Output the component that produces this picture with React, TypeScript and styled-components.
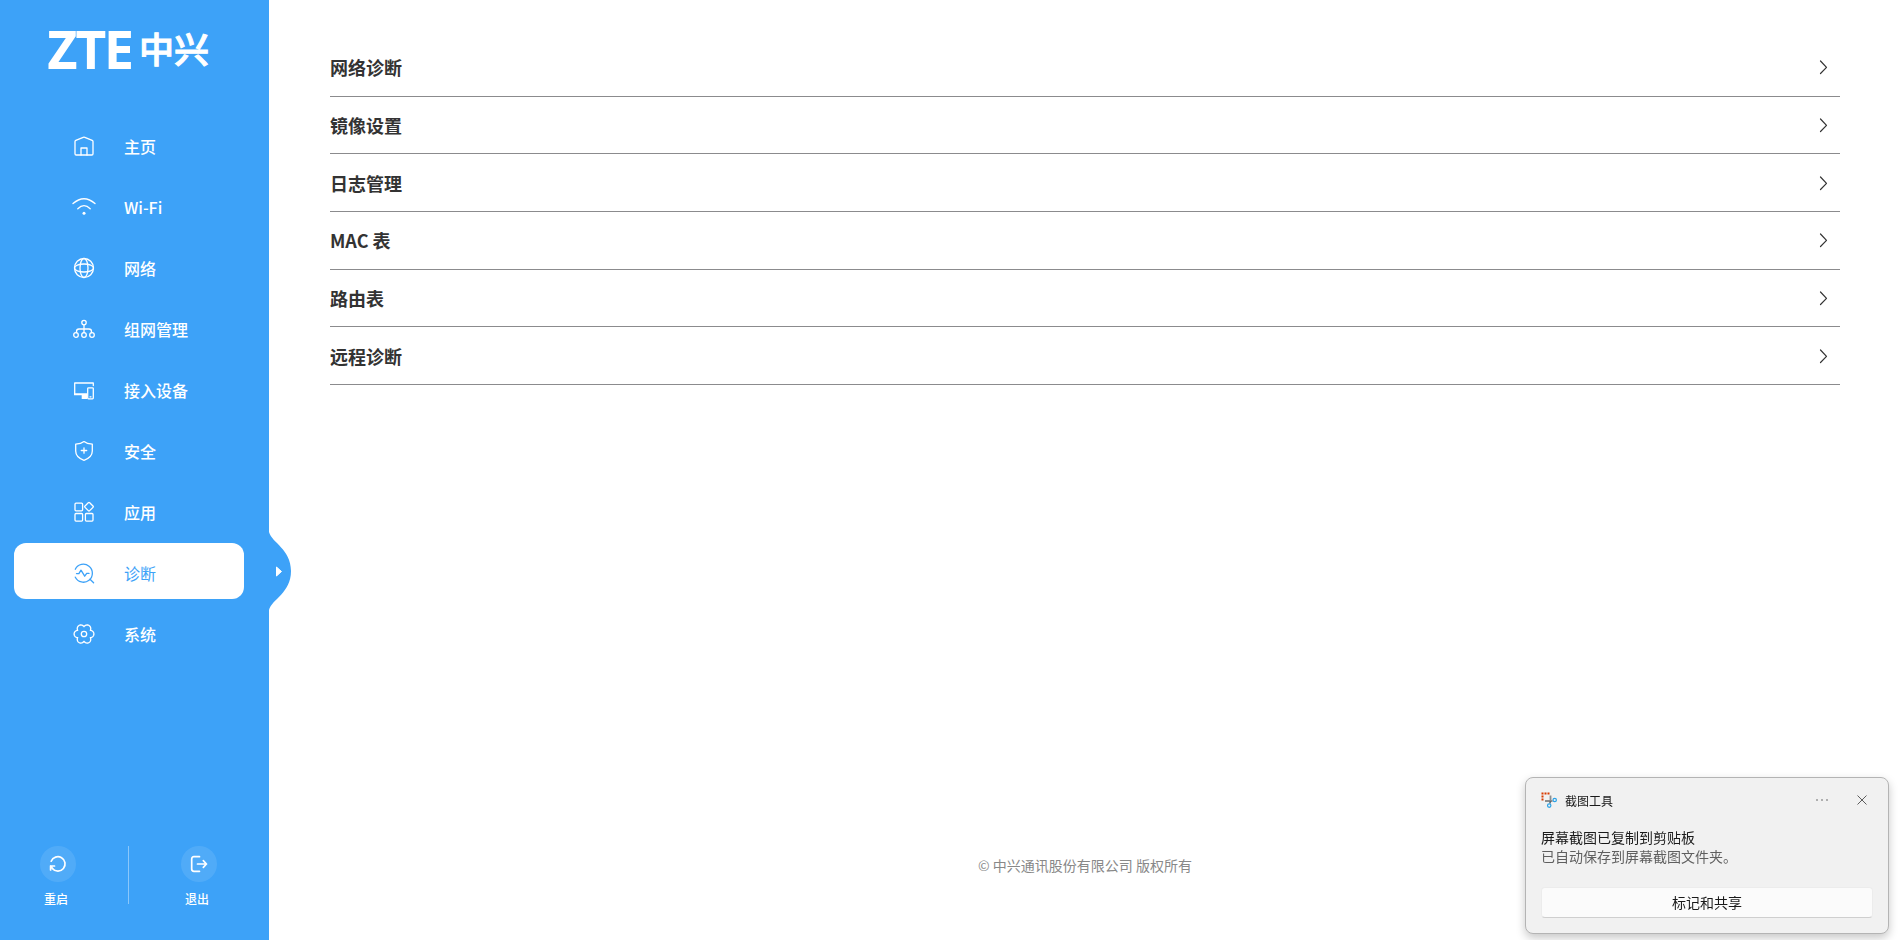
import React from "react";
import styled, { createGlobalStyle, css } from "styled-components";

const BLUE = "#3da2f8";
const SANS = '"Noto Sans CJK SC", "Noto Sans", sans-serif';

const GlobalStyle = createGlobalStyle`
  *, *::before, *::after { box-sizing: border-box; }
  body { margin: 0; background: #fff; color: #333; font-family: ${SANS}; }
  button { margin: 0; padding: 0; border: 0; background: none; font: inherit; color: inherit; cursor: pointer; }
  ul { margin: 0; padding: 0; list-style: none; }
  a { color: inherit; text-decoration: none; }
  p { margin: 0; }
`;

const Page = styled.div`
  display: flex;
  min-height: 100vh;
`;

const Sidebar = styled.aside`
  position: relative;
  flex: none;
  display: flex;
  flex-direction: column;
  width: 269px;
  padding: 17px 0 32px;
  background: ${BLUE};
  color: #fff;
`;

const Brand = styled.a`
  display: flex;
  align-items: center;
  gap: 6px;
  height: 64px;
  margin: 0 0 35px 48px;
  line-height: 64px;
`;

const BrandLatin = styled.span`
  font-family: "Open Sans", "Noto Sans", sans-serif;
  font-size: 50px;
  font-weight: 600;
  -webkit-text-stroke: 2px currentColor;
`;

const BrandHan = styled.span`
  padding-bottom: 2px;
  font-size: 35px;
  font-weight: 500;
  -webkit-text-stroke: 1px currentColor;
`;

const Menu = styled.ul`
  display: flex;
  flex-direction: column;
  gap: 5px;
  padding: 0 25px 0 14px;
`;

const MenuLink = styled.a<{ $active?: boolean }>`
  display: flex;
  align-items: center;
  gap: 28px;
  height: 56px;
  padding: 4px 0 0 58px;
  border-radius: 12px;
  font-size: 16px;
  line-height: 24px;
  font-weight: 500;
  ${(p) =>
    p.$active &&
    css`
      background: #fff;
      color: ${BLUE};
      font-weight: 400;
    `}
`;

const Line = styled.svg<{ $weight?: number }>`
  flex: none;
  display: block;
  fill: none;
  stroke: currentColor;
  stroke-width: ${(p) => p.$weight ?? 1.3};
  stroke-linecap: round;
  stroke-linejoin: round;
`;

const Actions = styled.div`
  display: grid;
  grid-template-columns: 1fr 1px 1fr;
  margin-top: auto;
  padding: 0 12px 0 0;
`;

const ActionDivider = styled.span`
  height: 58px;
  background: rgba(255, 255, 255, 0.4);
`;

const ActionButton = styled.button`
  justify-self: start;
  display: flex;
  flex-direction: column;
  align-items: flex-start;
  gap: 8px;
  margin-left: 40px;
  font-size: 12px;
  line-height: 18px;
  font-weight: 500;
  & + ${ActionDivider} + & {
    margin-left: 52px;
  }
`;

const ActionDisc = styled.span`
  display: grid;
  place-items: center;
  width: 36px;
  height: 36px;
  border-radius: 50%;
  background: rgba(255, 255, 255, 0.1);
`;

const ActionLabel = styled.span`
  padding-left: 4px;
`;

const Handle = styled.button`
  position: absolute;
  left: 100%;
  top: 532px;
  width: 22px;
  height: 78px;
  color: ${BLUE};
  svg { display: block; }
`;

const Main = styled.main`
  flex: 1;
  display: flex;
  flex-direction: column;
  padding: 39px 58px 61px 61px;
`;

const Sections = styled.ul`
  display: grid;
  grid-template-rows: repeat(6, 1fr);
  min-height: 346px;
`;

const SectionItem = styled.li`
  display: flex;
  border-bottom: 1px solid #8b8b8d;
`;

const SectionButton = styled.button`
  flex: 1;
  display: flex;
  align-items: center;
  justify-content: space-between;
  padding-right: 8px;
  font-size: 18px;
  line-height: 26px;
  font-weight: 700;
  text-align: left;
`;

const Footer = styled.footer`
  margin-top: auto;
  color: #888;
  font-size: 14px;
  line-height: 28px;
  text-align: center;
`;

const Toast = styled.section`
  position: fixed;
  right: 9px;
  bottom: 6px;
  width: 364px;
  padding: 7px 15px 15px;
  border: 1px solid #b4b4b4;
  border-radius: 8px;
  background: #f1f1f1;
  box-shadow: 0 4px 10px rgba(0, 0, 0, 0.22);
  color: #1a1a1a;
  font-size: 14px;
  line-height: 19px;
`;

const ToastHead = styled.header`
  display: flex;
  align-items: center;
  height: 30px;
  margin-bottom: 13px;
  font-size: 12px;
`;

const ToastName = styled.span`
  flex: 1;
  padding-left: 8px;
`;

const ToastIconButton = styled.button`
  display: grid;
  place-items: center;
  width: 40px;
  height: 30px;
  color: #5c5c5c;
  &:last-child { margin-right: -9px; }
`;

const ToastDetail = styled.p`
  color: #5f5f5f;
`;

const ToastAction = styled.button`
  display: block;
  width: 100%;
  height: 31px;
  margin-top: 21px;
  border: 1px solid #ececec;
  border-bottom-color: #cfcfcf;
  border-radius: 4px;
  background: #fbfbfb;
  line-height: 29px;
`;

// Six-lobed gear: rounded lobes separated by narrow notches.
const gearOutline = Array.from({ length: 145 }, (_, i) => {
  const a = (i / 144) * Math.PI * 2;
  const r = 7.3 + 2.6 * Math.pow(Math.abs(Math.cos(3 * a)), 0.8);
  return `${i ? "L" : "M"}${(12 + r * Math.cos(a)).toFixed(2)} ${(12 + r * Math.sin(a)).toFixed(2)}`;
}).join("");

const menu: { label: string; icon: React.ReactNode; active?: boolean }[] = [
  {
    label: "主页",
    icon: (
      <>
        <path d="M3 19.8V7.6Q3 6.7 3.8 6.3L11.2 3.3Q12 3 12.8 3.3L20.2 6.3Q21 6.7 21 7.6V19.8Q21 21 19.8 21H4.2Q3 21 3 19.8Z" />
        <path d="M9 21V14H15V21" />
      </>
    ),
  },
  {
    label: "Wi-Fi",
    icon: (
      <>
        <path d="M1 8.6Q12 -1.2 23 8.6M5.8 13.7Q12 7.4 18.2 13.7" />
        <circle cx="12" cy="18.3" r="1.5" fill="currentColor" stroke="none" />
      </>
    ),
  },
  {
    label: "网络",
    icon: (
      <>
        <circle cx="12" cy="12" r="9.5" />
        <ellipse cx="12" cy="12" rx="4" ry="9.5" />
        <ellipse cx="12" cy="12" rx="9.5" ry="4" />
      </>
    ),
  },
  {
    label: "组网管理",
    icon: (
      <>
        <circle cx="12" cy="5.6" r="2.2" />
        <circle cx="4" cy="18" r="2.3" />
        <circle cx="12" cy="18" r="2.3" />
        <circle cx="20" cy="18" r="2.3" />
        <path d="M12 7.8V15.7M4.5 15.7V14.5Q4.5 12 7 12H17Q19.5 12 19.5 14.5V15.7" />
      </>
    ),
  },
  {
    label: "接入设备",
    icon: (
      <>
        <path d="M21.3 7.5V5H2.7V16" />
        <path d="M2 15.3H15V21H9.7V17.2H2Z" fill="currentColor" stroke="none" />
        <rect x="15.7" y="9.8" width="5.6" height="11" rx="0.8" />
        <path d="M18 18.8H19" />
      </>
    ),
  },
  {
    label: "安全",
    icon: (
      <>
        <path d="M12 2.6C14 4.2 17 5 20.3 5.2V12C20.3 17 17 19.5 12 21.3C7 19.5 3.7 17 3.7 12V5.2C7 5 10 4.2 12 2.6Z" />
        <path d="M12 8.8V14.2M9.3 11.5H14.7" />
      </>
    ),
  },
  {
    label: "应用",
    icon: (
      <>
        <rect x="3" y="3.2" width="7.6" height="7.6" rx="1" />
        <rect x="3" y="13.5" width="7.6" height="7.6" rx="1" />
        <rect x="13.4" y="13.5" width="7.6" height="7.6" rx="1" />
        <rect x="13.7" y="3.4" width="6.6" height="6.6" rx="1" transform="rotate(45 17 6.7)" />
      </>
    ),
  },
  {
    label: "诊断",
    active: true,
    icon: (
      <>
        <path d="M3.3 8.2A9 9 0 1 1 3.3 16.2" />
        <path d="M4.5 12.6H6.9L9 9.2L12.7 15.2L14.7 12.4H17M18 18.3L21.6 21.8" />
      </>
    ),
  },
  {
    label: "系统",
    icon: (
      <>
        <path d={gearOutline} />
        <circle cx="12" cy="12" r="2.7" />
      </>
    ),
  },
];

const sections = ["网络诊断", "镜像设置", "日志管理", "MAC 表", "路由表", "远程诊断"];

function SnipIcon() {
  return (
    <svg width="16" height="16" viewBox="0 0 16 16" fill="none" aria-hidden="true">
      <path d="M9.5 3.5V10M4 9H11.5" stroke="#8d8d8d" strokeWidth="1.8" />
      <path d="M0.5 0.5h2v2h-2zM3.5 0.5h2v2h-2zM6.5 0.5h2v2h-2zM0.5 3.5h2v2h-2zM0.5 6.5h2v2h-2z" fill="#d83b01" />
      <path d="M9.5 9L8.8 11.5" stroke="#5a6670" strokeWidth="1.5" />
      <circle cx="13.7" cy="8" r="1.7" stroke="#2ba3e8" strokeWidth="1.2" />
      <circle cx="8.2" cy="13.6" r="1.7" stroke="#2ba3e8" strokeWidth="1.2" />
    </svg>
  );
}

export default function App() {
  return (
    <>
      <GlobalStyle />
      <Page>
        <Sidebar>
          <Brand href="#home" aria-label="ZTE中兴">
            <BrandLatin>ZTE</BrandLatin>
            <BrandHan>中兴</BrandHan>
          </Brand>
          <nav>
            <Menu>
              {menu.map((item) => (
                <li key={item.label}>
                  <MenuLink href="#" $active={item.active} aria-current={item.active ? "page" : undefined}>
                    <Line width="24" height="24" viewBox="0 0 24 24" aria-hidden="true">
                      {item.icon}
                    </Line>
                    {item.label}
                  </MenuLink>
                </li>
              ))}
            </Menu>
          </nav>
          <Actions>
            <ActionButton type="button">
              <ActionDisc>
                <Line $weight={1.7} width="20" height="20" viewBox="0 0 20 20" aria-hidden="true">
                  <path d="M3.2 7.2A7.2 7.2 0 1 1 4.5 14.7M2.6 16V12H6.5M2.6 12L5.5 15.5" />
                </Line>
              </ActionDisc>
              <ActionLabel>重启</ActionLabel>
            </ActionButton>
            <ActionDivider />
            <ActionButton type="button">
              <ActionDisc>
                <Line $weight={1.7} width="20" height="20" viewBox="0 0 20 20" aria-hidden="true">
                  <path d="M10.5 2.7H5Q2.7 2.7 2.7 5V15Q2.7 17.3 5 17.3H10.5M8.5 10H17.5M14.3 6.7L17.5 10L14.3 13.3" />
                </Line>
              </ActionDisc>
              <ActionLabel>退出</ActionLabel>
            </ActionButton>
          </Actions>
          <Handle type="button" aria-label="收起菜单">
            <svg width="22" height="78" viewBox="0 0 22 78" aria-hidden="true">
              <path d="M0 0C3 11 22 17 22 39S3 67 0 78Z" fill="currentColor" />
              <path d="M7.5 35L12.5 39.5L7.5 44Z" fill="#fff" stroke="#fff" strokeLinejoin="round" />
            </svg>
          </Handle>
        </Sidebar>
        <Main>
          <Sections>
            {sections.map((name) => (
              <SectionItem key={name}>
                <SectionButton type="button">
                  {name}
                  <Line $weight={1.2} width="16" height="16" viewBox="0 0 16 16" aria-hidden="true">
                    <path d="M4.5 2L10.5 8.3L4.5 14.5" />
                  </Line>
                </SectionButton>
              </SectionItem>
            ))}
          </Sections>
          <Footer>© 中兴通讯股份有限公司 版权所有</Footer>
        </Main>
      </Page>
      <Toast role="status">
        <ToastHead>
          <SnipIcon />
          <ToastName>截图工具</ToastName>
          <ToastIconButton type="button" aria-label="更多">
            <svg width="12" height="4" viewBox="0 0 12 4" fill="currentColor">
              <circle cx="1" cy="2" r="0.8" />
              <circle cx="6" cy="2" r="0.8" />
              <circle cx="11" cy="2" r="0.8" />
            </svg>
          </ToastIconButton>
          <ToastIconButton type="button" aria-label="关闭">
            <svg width="10" height="10" viewBox="0 0 10 10" stroke="currentColor">
              <path d="M0.5 0.5L9.5 9.5M9.5 0.5L0.5 9.5" />
            </svg>
          </ToastIconButton>
        </ToastHead>
        <p>屏幕截图已复制到剪贴板</p>
        <ToastDetail>已自动保存到屏幕截图文件夹。</ToastDetail>
        <ToastAction type="button">标记和共享</ToastAction>
      </Toast>
    </>
  );
}
